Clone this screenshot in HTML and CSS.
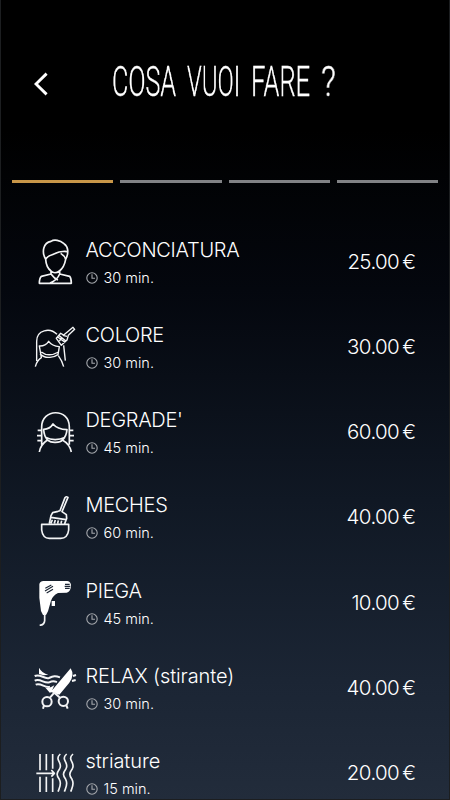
FILE: index.html
```html
<!DOCTYPE html>
<html lang="it">
<head>
<meta charset="utf-8">
<title>Cosa vuoi fare ?</title>
<link rel="stylesheet" href="styles.css">
</head>
<body>
<svg class="defs" aria-hidden="true"><symbol id="clock" viewBox="0 0 12 12"><circle cx="6" cy="6" r="5.2"/><path d="M6 2.3V6.2H9"/></symbol></svg>
<main class="screen">
<header class="header">
<svg class="back" viewBox="0 0 14 24"><path d="M12.6 1.6 2 12 12.6 22.4"/></svg>
<h1 class="title"><span class="word cosa">COSA</span><span class="word vuoi">VUOI</span><span class="word fare">FARE</span><span class="word mark">?</span></h1>
</header>
<div class="steps"><i class="step active"></i><i class="step"></i><i class="step"></i><i class="step"></i></div>
<ul class="list">
<li class="row">
<svg class="icon" viewBox="24 15 132 150"><path d="M62 88C49 65 55 38 78 34C88 27 105 31 117 41C130 49 132 69 122 88C119 105 110 118 103 123C95 130 84 130 78 123C69 116 63 103 62 88C68 75 81 76 94 69C103 64 112 65 119 64L126 65M107 70C115 75 120 79 122 88M78 123V132L49 139Q43 145 43 160H139Q139 145 134 139L104 132V123M78 132Q88 146 99 150M104 132Q96 151 75 159"/></svg>
<div class="info"><div class="name">ACCONCIATURA</div><div class="time"><svg class="clock"><use href="#clock"/></svg><span>30 min.</span></div></div><div class="price">25.00<span class="euro">€</span></div>
</li>
<li class="row">
<svg class="icon thin" viewBox="24 15 132 150"><path d="M35 138V79C35 44 75 37 96 58M116 91 121 137M31 155Q36 136 49 128L43 93Q61 94 71 79Q81 93 103 95L99 119Q86 128 72 127Q57 128 45 116M49 111Q70 128 101 111M100 122Q111 137 116 155M94 70 107 55 116 60 127 51 144 37 149 43 130 61 126 75 109 91ZM98 66 121 82M102 62 123 78M103 78 110 70M113 61 126 64"/></svg>
<div class="info"><div class="name">COLORE</div><div class="time"><svg class="clock"><use href="#clock"/></svg><span>30 min.</span></div></div><div class="price">30.00<span class="euro">€</span></div>
</li>
<li class="row">
<svg class="icon" viewBox="24 15 132 150"><path d="M50 134V81C50 25 133 23 133 81V134M43 156Q46 135 67 120Q57 108 56 88Q75 87 84 72Q97 88 126 89Q124 110 112 120Q134 132 139 156M67 120Q78 128 92 127Q107 127 112 120M61 112Q90 126 121 112M38 91H50M36 107H50M37 122H50M133 91H145M133 107H147M133 122H146"/></svg>
<div class="info"><div class="name">DEGRADE'</div><div class="time"><svg class="clock"><use href="#clock"/></svg><span>45 min.</span></div></div><div class="price">60.00<span class="euro">€</span></div>
</li>
<li class="row">
<svg class="icon" viewBox="24 15 132 150"><path d="M50 118H131V135Q128 160 107 160H73Q53 160 50 135ZM73 115 78 92 83 83 99 79 105 77 120 38Q123 33 129 37L111 80 124 89 125 100 119 116M78 97 123 104M82 104 78 115M91 105 88 115M100 106 98 115M110 107 108 115"/></svg>
<div class="info"><div class="name">MECHES</div><div class="time"><svg class="clock"><use href="#clock"/></svg><span>60 min.</span></div></div><div class="price">40.00<span class="euro">€</span></div>
</li>
<li class="row">
<svg class="icon" viewBox="24 15 132 150"><path class="solid" d="M43 40Q44 31 56 30H127Q139 32 138 46Q136 63 125 65L99 66Q82 75 78 89L69 121L63 132H54L48 120L43 80ZM80 90H90V105H80Z"/><path d="M59 130V149Q58 162 44 163"/><path class="cut" d="M61 52 79 42M60 60 84 46M65 66 84 55M120 40H134M119 46H136M120 52H134"/></svg>
<div class="info"><div class="name">PIEGA</div><div class="time"><svg class="clock"><use href="#clock"/></svg><span>45 min.</span></div></div><div class="price">10.00<span class="euro">€</span></div>
</li>
<li class="row">
<svg class="icon" viewBox="24 15 132 150"><path class="solid" d="M42 35Q51 52 70 56L56 58 42 54ZM60 94Q71 99 88 88L80 106 75 111ZM137 37Q150 58 133 80L103 116 77 108Z"/><path class="wave" d="M29 60C46 52 57 70 72 66C85 60 91 59 105 64M29 74C46 66 58 84 73 79C84 73 90 76 96 78M32 86C48 79 60 97 75 92M144 60 153 57M141 75 152 72"/><circle class="wave" cx="66" cy="137" r="14"/><circle class="wave" cx="115" cy="136" r="14"/><path class="wave" d="M75 125 88 110 105 125M57 148 54 158M124 148 128 158"/></svg>
<div class="info"><div class="name">RELAX (stirante)</div><div class="time"><svg class="clock"><use href="#clock"/></svg><span>30 min.</span></div></div><div class="price">40.00<span class="euro">€</span></div>
</li>
<li class="row">
<svg class="icon" viewBox="24 15 132 150"><path d="M45 39V88M45 107V153M64 39V88M64 107V153M83 39V83M83 112V153M34 97H87M79 87 88 97 79 107M106 39C86 57 115 65 104 83C94 97 94 103 103 115C111 129 104 139 99 152M125 39C105 57 134 65 123 83C113 97 113 103 122 115C130 129 123 139 118 152M144 39C124 57 153 65 142 83C132 97 132 103 141 115C149 129 142 139 137 152"/></svg>
<div class="info"><div class="name low">striature</div><div class="time"><svg class="clock"><use href="#clock"/></svg><span>15 min.</span></div></div><div class="price">20.00<span class="euro">€</span></div>
</li>
</ul>
</main>
</body>
</html>
```
FILE: styles.css
```css
* { box-sizing: border-box; }
body { margin: 0; background: #000; }
.defs { position: absolute; width: 0; height: 0; }
.screen {
  width: 450px;
  height: 800px;
  overflow: hidden;
  color: #fff;
  font-family: Inter, "Liberation Sans", sans-serif;
  font-weight: 300;
  background: linear-gradient(#000 0, #000 130px, #04070e 290px, #101824 500px, #1b2534 680px, #222c3b 800px);
  border: 1px solid #1c1e20;
  border-top: 0;
}
.header { display: flex; height: 180px; padding: 60px 0 0 33px; }
.back { width: 14px; height: 24px; margin-top: 12px; fill: none; stroke: #fff; stroke-width: 2.9; }
.title { display: flex; margin: 0 0 0 64px; font-family: Roboto, sans-serif; font-size: 42px; font-weight: 300; line-height: 43px; }
.word { display: block; transform-origin: 0 50%; white-space: nowrap; will-change: transform; -webkit-text-stroke: .3px #fff; }
.cosa { width: 75px; transform: scaleX(.6); }
.vuoi { width: 64px; transform: scaleX(.57); }
.fare { width: 70px; transform: scaleX(.61); }
.mark { transform: scaleX(.78); }
.steps { display: grid; grid-template-columns: repeat(4, 1fr); gap: 7px; padding: 0 11px; }
.step { height: 2.6px; background: #818285; }
.step.active { background: #c89648; }
.list { list-style: none; margin: 0; padding: 38.2px 0 0; }
.row { display: flex; height: 85.2px; padding: 14px 33px 0 32px; }
.icon { flex: none; width: 44px; height: 50px; fill: none; stroke: #f3f4f5; stroke-width: 5; stroke-linejoin: round; }
.thin { stroke-width: 4.2; }
.solid { fill: #fff; stroke: none; }
.cut { stroke: #1b2534; stroke-width: 3.5; }
.wave { stroke-width: 6; }
.info { flex: 1; margin-left: 8.5px; }
.name { margin-top: 3px; font-size: 20px; line-height: 24px; letter-spacing: -.3px; white-space: nowrap; }
.low, .row:nth-child(6) .name { letter-spacing: -.1px; }
.time { display: flex; align-items: center; gap: 6px; margin-top: 7px; font-size: 14.5px; line-height: 18px; }
.clock { width: 12px; height: 12px; fill: none; stroke: #a5a8ad; stroke-width: 1.1; }
.price { margin-top: 15px; font-size: 20.5px; line-height: 24px; letter-spacing: -.6px; white-space: nowrap; }
.euro { margin-left: 3px; letter-spacing: 0; }
```
